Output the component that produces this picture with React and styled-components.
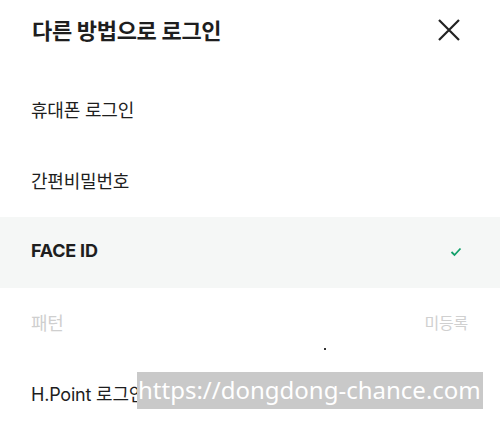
import React from 'react';
import styled, { createGlobalStyle } from 'styled-components';

const GlobalStyle = createGlobalStyle`
  html, body {
    margin: 0;
    padding: 0;
    background: #fff;
  }
  body {
    font-family: Inter, 'Noto Sans CJK KR', sans-serif;
    color: #222;
  }
`;

const Sheet = styled.div`
  position: relative;
  width: 500px;
  height: 426px;
  overflow: hidden;
  background: #fff;
`;

const Header = styled.div`
  display: flex;
  align-items: center;
  justify-content: space-between;
  height: 64px;
  padding: 0 39px 4px 32px;
  box-sizing: border-box;
`;

const Title = styled.h2`
  margin: 0 0 2px;
  font-size: 22px;
  font-weight: 700;
  letter-spacing: -0.3px;
  color: #1e1e1e;
`;

const CloseButton = styled.button`
  display: flex;
  padding: 0;
  border: 0;
  background: none;
  cursor: pointer;
`;

const List = styled.ul`
  list-style: none;
  margin: 11px 0 0;
  padding: 0;
`;

const Row = styled.li`
  display: flex;
  align-items: center;
  justify-content: space-between;
  height: 71px;
  padding: 0 32px 4px 31px;
  box-sizing: border-box;
  background: ${p => (p.$active ? '#f5f7f6' : '#fff')};
`;

const Label = styled.span`
  font-size: 18px;
  letter-spacing: -0.2px;
  font-weight: ${p => (p.$bold ? 700 : 400)};
  color: ${p => (p.$disabled ? '#cfcfcf' : '#1e1e1e')};
`;

const Status = styled.span`
  font-size: 16px;
  letter-spacing: -0.2px;
  color: #d0d0d0;
`;

const Check = styled.span`
  display: flex;
  margin: 2px 6px 0 0;
`;

const Watermark = styled.div`
  position: absolute;
  left: 137px;
  top: 372px;
  width: 346px;
  height: 37px;
  background: #c9c9c9;
  color: #fff;
  font-family: 'Noto Sans', sans-serif;
  font-size: 24px;
  line-height: 36px;
  white-space: nowrap;
  overflow: hidden;
  padding-left: 1px;
  box-sizing: border-box;
`;

const Dot = styled.div`
  position: absolute;
  left: 324px;
  top: 348px;
  width: 2px;
  height: 2px;
  background: #333;
`;

const CloseIcon = () => (
  <svg width="24" height="24" viewBox="0 0 24 24" fill="none">
    <path d="M2 2L22 22M22 2L2 22" stroke="#222" strokeWidth="2.2" />
  </svg>
);

const CheckIcon = () => (
  <svg width="12" height="10" viewBox="0 0 12 10" fill="none">
    <path d="M1.5 5L4.5 8L10.5 1.5" stroke="#12a06a" strokeWidth="1.8" />
  </svg>
);

const methods = [
  { label: '휴대폰 로그인' },
  { label: '간편비밀번호' },
  { label: 'FACE ID', active: true },
  { label: '패턴', disabled: true, status: '미등록' },
  { label: 'H.Point 로그인' },
];

export default function App() {
  return (
    <>
      <GlobalStyle />
      <Sheet>
        <Header>
          <Title>다른 방법으로 로그인</Title>
          <CloseButton aria-label="닫기">
            <CloseIcon />
          </CloseButton>
        </Header>
        <List>
          {methods.map(m => (
            <Row key={m.label} $active={m.active}>
              <Label $bold={m.active} $disabled={m.disabled}>
                {m.label}
              </Label>
              {m.active && (
                <Check>
                  <CheckIcon />
                </Check>
              )}
              {m.status && <Status>{m.status}</Status>}
            </Row>
          ))}
        </List>
        <Dot />
        <Watermark>https://dongdong-chance.com</Watermark>
      </Sheet>
    </>
  );
}
